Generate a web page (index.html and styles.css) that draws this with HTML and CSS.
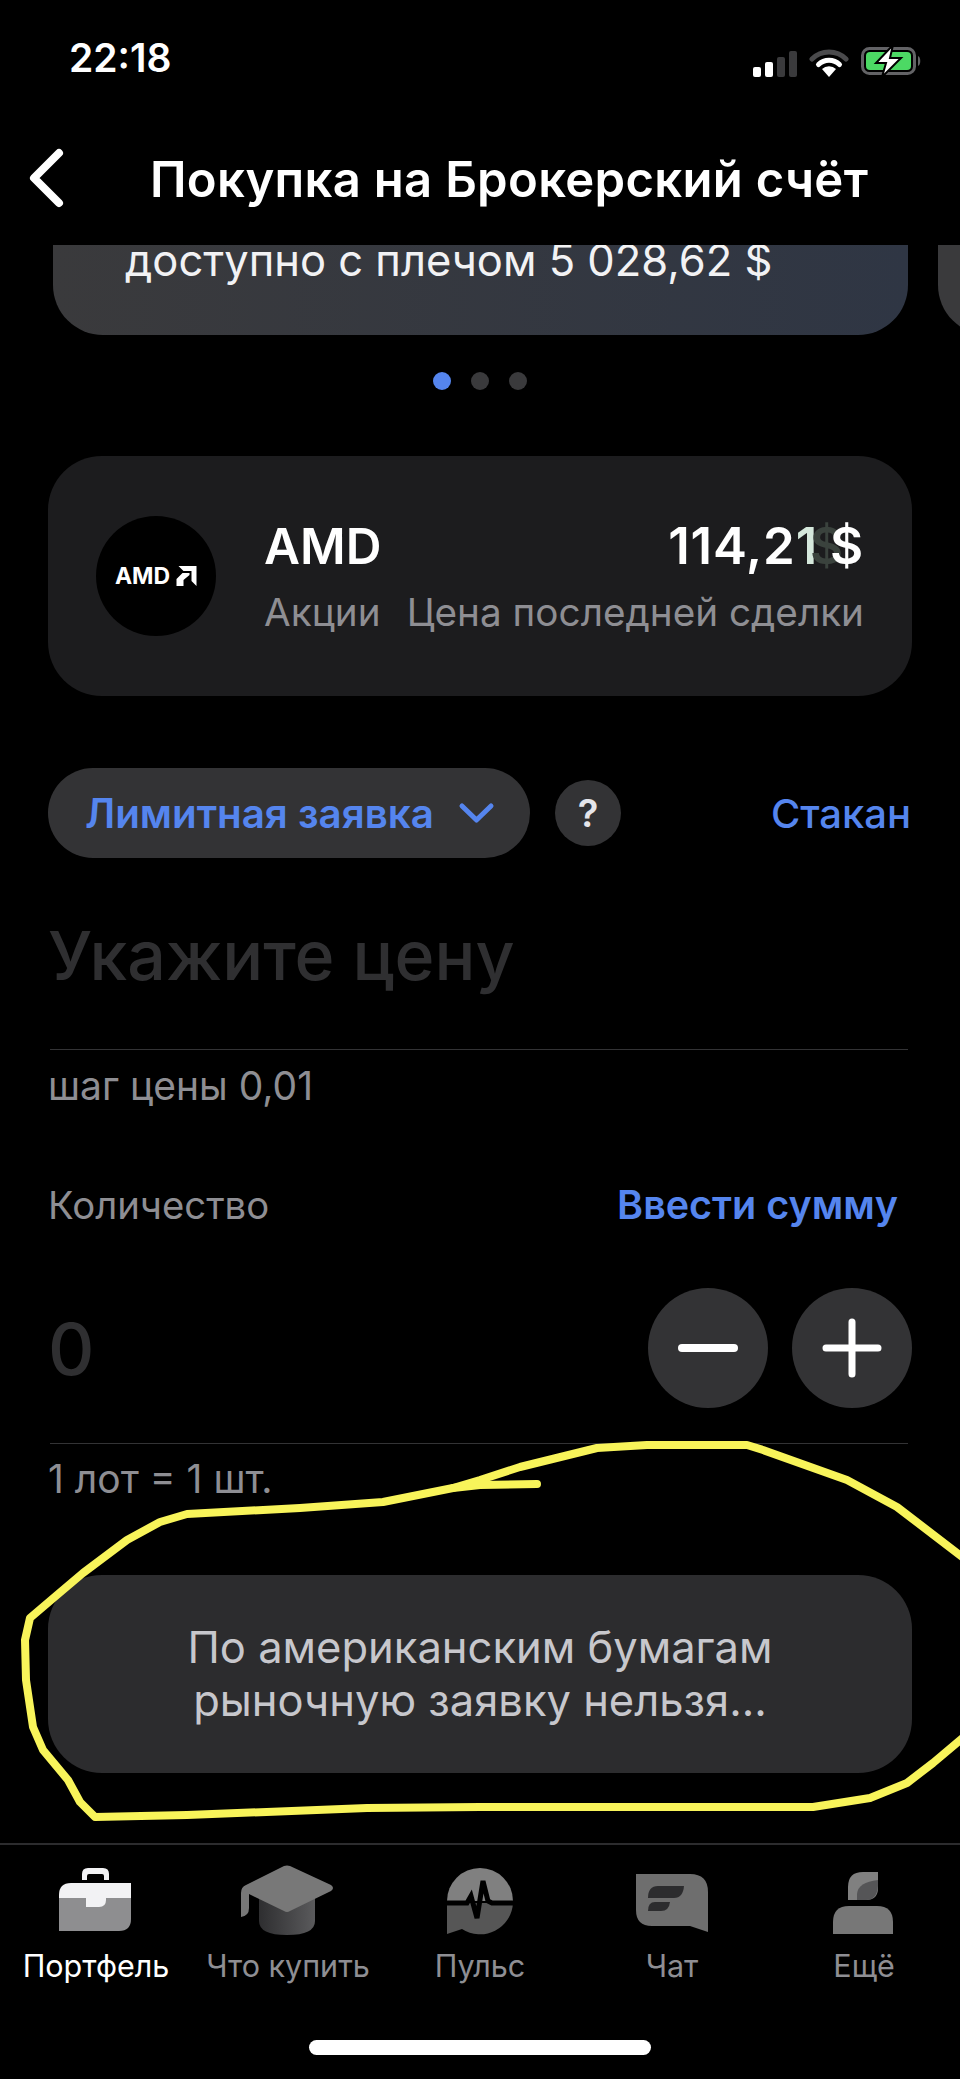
FILE: index.html
```html
<!DOCTYPE html>
<html lang="ru">
<head>
    <meta charset="UTF-8">
    <meta name="viewport" content="width=device-width, initial-scale=1.0">
    <title>Покупка на Брокерский счёт</title>
    <link rel="stylesheet" href="styles.css">
</head>
<body>
    <div class="screen">
        <div class="status-bar">
            <span class="time">22:18</span>
            <div class="status-icons">
                <svg width="44" height="26" viewBox="0 0 44 26">
                    <rect x="0" y="16" width="8" height="10" rx="2" fill="#fff"/>
                    <rect x="12" y="11" width="8" height="15" rx="2" fill="#fff"/>
                    <rect x="24" y="6" width="8" height="20" rx="2" fill="#3a3a3c"/>
                    <rect x="36" y="0" width="8" height="26" rx="2" fill="#3a3a3c"/>
                </svg>
                <svg width="40" height="28" viewBox="0 0 40 28">
                    <path d="M3 10 A24 24 0 0 1 37 10" fill="none" stroke="#4a4a4c" stroke-width="5" stroke-linecap="round"/>
                    <path d="M9.500 15.500 A15 15 0 0 1 30.500 15.500" fill="none" stroke="#fff" stroke-width="5" stroke-linecap="round"/>
                    <path d="M13 20 A10 10 0 0 1 27 20 L20 28 Z" fill="#fff"/>
                </svg>
                <svg width="62" height="32" viewBox="0 0 62 32">
                    <rect x="1.500" y="3.500" width="52" height="25" rx="7" fill="none" stroke="#636366" stroke-width="3"/>
                    <rect x="5" y="7" width="45" height="18" rx="4" fill="#4cd964"/>
                    <path d="M57 11 C60 12 60 20 57 21 Z" fill="#636366"/>
                    <path d="M32 0 L15 18 H25 L21 32 L40 13 H29 Z" fill="#fff" stroke="#000" stroke-width="2"/>
                </svg>
            </div>
        </div>

        <div class="nav-bar">
            <svg class="back" width="36" height="60" viewBox="0 0 36 60">
                <path d="M31 5 L6 30 L31 55" fill="none" stroke="#fff" stroke-width="8" stroke-linecap="round" stroke-linejoin="round"/>
            </svg>
            <h1>Покупка на Брокерский счёт</h1>
        </div>

        <div class="accounts">
            <div class="account-card">
                <p>доступно с плечом 5 028,62 $</p>
            </div>
            <div class="account-card next"></div>
        </div>

        <div class="dots">
            <span class="dot active"></span>
            <span class="dot"></span>
            <span class="dot"></span>
        </div>

        <div class="stock-card">
            <div class="logo">
                <span>AMD</span>
                <svg width="21" height="20" viewBox="0 0 20 20">
                    <path d="M2 0 H20 V20 L15 15 V5 H7 Z" fill="#fff"/>
                    <path d="M0 13 L6 7 H13 V9 L7 14 V20 H0 Z" fill="#fff"/>
                </svg>
            </div>
            <div class="stock-info">
                <div class="stock-row">
                    <span class="stock-name">AMD</span>
                    <span class="stock-price">114,2<span class="tick">1</span><span class="currency">$</span></span>
                </div>
                <div class="stock-row sub">
                    <span>Акции</span>
                    <span>Цена последней сделки</span>
                </div>
            </div>
        </div>

        <div class="order-row">
            <div class="order-type">
                <span>Лимитная заявка</span>
                <svg width="37" height="22" viewBox="0 0 37 22">
                    <path d="M4 4 L18.500 18 L33 4" fill="none" stroke="#5585ee" stroke-width="5" stroke-linecap="round" stroke-linejoin="round"/>
                </svg>
            </div>
            <div class="help">?</div>
            <a class="link depth">Стакан</a>
        </div>

        <div class="price-field">
            <div class="placeholder">Укажите цену</div>
        </div>
        <div class="hint step">шаг цены 0,01</div>

        <div class="qty-head">
            <span class="hint qty-label">Количество</span>
            <a class="link sum">Ввести сумму</a>
        </div>

        <div class="qty-row">
            <span class="qty-value">0</span>
            <div class="qty-buttons">
                <button class="round">
                    <svg width="60" height="44" viewBox="0 0 60 44"><path d="M4 22 H56" stroke="#fff" stroke-width="8" stroke-linecap="round"/></svg>
                </button>
                <button class="round">
                    <svg width="60" height="60" viewBox="0 0 60 60"><path d="M4 30 H56 M30 4 V56" stroke="#fff" stroke-width="7" stroke-linecap="round"/></svg>
                </button>
            </div>
        </div>
        <div class="hint lot">1 лот = 1 шт.</div>

        <div class="notice">По американским бумагам<br>рыночную заявку нельзя...</div>

        <nav class="tab-bar">
            <div class="tab active">
                <svg width="96" height="76" viewBox="0 0 96 76">
                    <path d="M34 17 V11 Q34 5 40 5 H55 Q61 5 61 11 V17 H56 V13 Q56 11 54 11 H41 Q39 11 39 13 V17 Z" fill="#f2f2f4"/>
                    <path d="M11 35 H83 V56 Q83 68 71 68 H11 Z" fill="#8e8e90"/>
                    <path d="M11 35 V32 Q11 20 23 20 H83 V35 Z" fill="#f2f2f4"/>
                    <path d="M38 35 H58 V37 Q58 44 51 44 H38 Z" fill="#f2f2f4"/>
                </svg>
                <span>Портфель</span>
            </div>
            <div class="tab">
                <svg width="96" height="76" viewBox="0 0 96 76">
                    <defs>
                        <linearGradient id="capBase" x1="0" y1="0" x2="1" y2="0">
                            <stop offset="0" stop-color="#2e2e30"/>
                            <stop offset="1" stop-color="#5a5a5c"/>
                        </linearGradient>
                    </defs>
                    <path d="M19 34 H75 V58 Q75 72 47 72 Q19 72 19 58 Z" fill="url(#capBase)"/>
                    <path d="M44 3 Q47 2 50 3 L91 22 Q95 25 91 28 L50 48 Q47 50 44 48 L9 31 V45 Q9 53 1 54 V30 Q1 24 6 22 Z" fill="#787878"/>
                </svg>
                <span>Что купить</span>
            </div>
            <div class="tab">
                <svg width="96" height="76" viewBox="0 0 96 76">
                    <path d="M15 38 A33 33 0 0 1 81 38 Z" fill="#808080"/>
                    <path d="M15 40 H81 A33 33 0 0 1 30 66 L15 71 Z" fill="#565656"/>
                    <path d="M15 40 H35 L39 33 L45 55 L51 18 L56 38 L60 40 H81" fill="none" stroke="#000" stroke-width="5"/>
                </svg>
                <span>Пульс</span>
            </div>
            <div class="tab">
                <svg width="96" height="76" viewBox="0 0 96 76">
                    <path d="M12 11 H66 Q84 11 84 29 V69 L66 63 H28 Q12 63 12 47 Z" fill="#6e6e6e"/>
                    <path d="M34 23 H60 Q59 35 50 35 H24 Q24 23 34 23 Z" fill="#2c2c2e"/>
                    <path d="M31 39 H46 Q45 48 37 48 H24 Q24 39 31 39 Z" fill="#2c2c2e"/>
                </svg>
                <span>Чат</span>
            </div>
            <div class="tab">
                <svg width="96" height="76" viewBox="0 0 96 76">
                    <path d="M32 37 V24 Q32 9 47 9 H62 V25 Q62 37 50 37 Z" fill="#808080"/>
                    <path d="M41 37 V31 Q42 19 62 17 V23 Q61 37 50 37 Z" fill="#555557"/>
                    <path d="M17 71 V59 Q17 43 33 43 H61 Q77 43 77 59 V71 Z" fill="#777"/>
                </svg>
                <span>Ещё</span>
            </div>
        </nav>

        <div class="home-indicator"></div>

        <!-- обводка маркером поверх скриншота -->
        <svg class="marker" width="960" height="2079" viewBox="0 0 960 2079">
            <path d="M537 1484 L480 1485 L453 1488 L383 1502 L300 1508 L187 1514 L160 1522 L127 1540 L83 1573 L57 1595 L30 1618 L25 1640 L26 1680 L33 1727 L43 1750 L68 1780 L80 1802 L95 1817 L187 1815 L367 1808 L480 1807 L620 1807 L813 1807 L870 1798 L907 1783 L933 1763 L965 1736"/>
            <path d="M453 1488 L480 1480 L520 1467 L597 1448 L647 1445 L747 1445 L763 1450 L847 1480 L897 1507 L965 1559"/>
        </svg>
    </div>
</body>
</html>
```

FILE: styles.css
```css
* {
    box-sizing: border-box;
}
body {
    margin: 0;
    background: #000;
    font-family: Inter, "Noto Sans", sans-serif;
    color: #fff;
}
p, h1 {
    margin: 0;
}
.screen {
    position: relative;
    width: 960px;
    height: 2079px;
    overflow: hidden;
    background: #000;
}

/* status bar */
.status-bar {
    height: 114px;
    padding: 36px 37px 0 69px;
    display: flex;
    justify-content: space-between;
    align-items: flex-start;
}
.time {
    font-size: 39px;
    line-height: 44px;
    font-weight: 600;
}
.status-icons {
    display: flex;
    align-items: flex-end;
    gap: 12px;
    padding-top: 9px;
}

/* header */
.nav-bar {
    height: 131px;
    padding-left: 28px;
    display: flex;
    align-items: center;
    gap: 86px;
}
.back {
    flex: none;
    margin-bottom: 4px;
}
h1 {
    font-size: 49px;
    letter-spacing: 0.3px;
    font-weight: 600;
    white-space: nowrap;
}

/* account cards */
.accounts {
    display: flex;
    gap: 30px;
    height: 90px;
    padding-left: 53px;
    overflow: hidden;
}
.account-card {
    flex: none;
    width: 855px;
    height: 90px;
    padding-left: 72px;
    border-radius: 0 0 50px 50px;
    background: linear-gradient(90deg, #3a3a3c, #2f3644);
    overflow: hidden;
}
.account-card p {
    font-size: 43.5px;
    line-height: 30px;
    color: #f2f2f4;
}
.account-card.next {
    width: 100px;
    background: #3a3a3c;
}
.dots {
    height: 91px;
    display: flex;
    justify-content: center;
    align-items: center;
    gap: 20px;
}
.dot {
    width: 18px;
    height: 18px;
    border-radius: 50%;
    background: #3a3a3c;
}
.dot.active {
    background: #5585ee;
}

/* instrument */
.stock-card {
    margin: 30px 48px 0;
    height: 240px;
    padding: 60px 48px 0;
    border-radius: 54px;
    background: #1c1c1e;
    display: flex;
    gap: 48px;
}
.logo {
    flex: none;
    width: 120px;
    height: 120px;
    border-radius: 50%;
    background: #000;
    display: flex;
    align-items: center;
    justify-content: center;
    gap: 6px;
    font-size: 23px;
    font-weight: 700;
}
.logo span {
    line-height: 20px;
}
.stock-info {
    flex: 1;
    margin-top: 2px;
}
.stock-row {
    display: flex;
    justify-content: space-between;
    font-size: 49.5px;
    line-height: 56px;
    font-weight: 600;
}
.stock-row.sub {
    margin-top: 16px;
    font-size: 38.7px;
    line-height: 44px;
    font-weight: 400;
    color: #8e8e93;
}
.stock-price {
    font-size: 51px;
    letter-spacing: 0.8px;
}
.tick {
    color: #d5e8dc;
}
.tick::after {
    content: "$";
    margin-left: -8px;
    margin-right: -14px;
    color: #3a423d;
}

/* order type */
.order-row {
    margin: 72px 48px 0;
    height: 90px;
    display: flex;
    align-items: center;
}
.order-type {
    width: 482px;
    height: 90px;
    padding: 0 35px 0 37px;
    border-radius: 45px;
    background: #333335;
    display: flex;
    align-items: center;
    justify-content: space-between;
    font-size: 40.3px;
    font-weight: 600;
    color: #5585ee;
}
.help {
    width: 66px;
    height: 66px;
    margin-left: 25px;
    border-radius: 50%;
    background: #333335;
    text-align: center;
    font-size: 38px;
    line-height: 66px;
    font-weight: 600;
    color: #e5e5ea;
}
.link {
    color: #5585ee;
    font-size: 40px;
    font-weight: 600;
}
.depth {
    margin: 0 1px 0 auto;
    font-weight: 500;
}

/* price and quantity */
.price-field {
    margin: 56px 52px 0 50px;
    height: 136px;
    padding-top: 2px;
    border-bottom: 1px solid #333335;
}
.placeholder {
    margin-left: -2px;
    font-size: 68px;
    line-height: 78px;
    font-weight: 500;
    color: #2f2f31;
}
.hint {
    font-size: 39px;
    line-height: 44px;
    color: #8e8e93;
}
.step {
    margin: 14px 0 0 48px;
}
.qty-head {
    margin: 75px 62px 0 48px;
    display: flex;
    justify-content: space-between;
    line-height: 44px;
}
.qty-label {
    font-size: 38.3px;
}
.sum {
    font-size: 39.5px;
    line-height: 44px;
}
.qty-row {
    margin: 61px 48px 0;
    height: 120px;
    display: flex;
    justify-content: space-between;
    align-items: center;
}
.qty-value {
    font-size: 72px;
    font-weight: 500;
    color: #2f2f31;
}
.qty-buttons {
    display: flex;
    gap: 24px;
}
.round {
    width: 120px;
    height: 120px;
    padding: 0;
    border: none;
    border-radius: 50%;
    background: #333335;
    display: flex;
    align-items: center;
    justify-content: center;
}
.lot {
    margin: 35px 52px 0 50px;
    padding-top: 13px;
    border-top: 1px solid #333335;
    text-indent: -2px;
}
.notice {
    margin: 74px 48px 0;
    height: 198px;
    border-radius: 54px;
    background: #2c2c2e;
    display: flex;
    align-items: center;
    justify-content: center;
    text-align: center;
    font-size: 43.5px;
    line-height: 53px;
    color: #c7c7cc;
}

/* bottom tabs */
.tab-bar {
    margin-top: 70px;
    border-top: 2px solid #2c2c2e;
    padding-top: 18px;
    display: grid;
    grid-template-columns: repeat(5, 192px);
}
.tab {
    display: flex;
    flex-direction: column;
    align-items: center;
    font-size: 30.5px;
    line-height: 36px;
    color: #8e8e93;
}
.tab span {
    margin-top: 9px;
}
.tab.active {
    color: #fff;
}
.home-indicator {
    position: absolute;
    left: 309px;
    top: 2040px;
    width: 342px;
    height: 15px;
    border-radius: 8px;
    background: #fff;
}
.marker {
    position: absolute;
    left: 0;
    top: 0;
    pointer-events: none;
}
.marker path {
    fill: none;
    stroke: #f8f45a;
    stroke-width: 8;
    stroke-linecap: round;
    stroke-linejoin: round;
}
```
